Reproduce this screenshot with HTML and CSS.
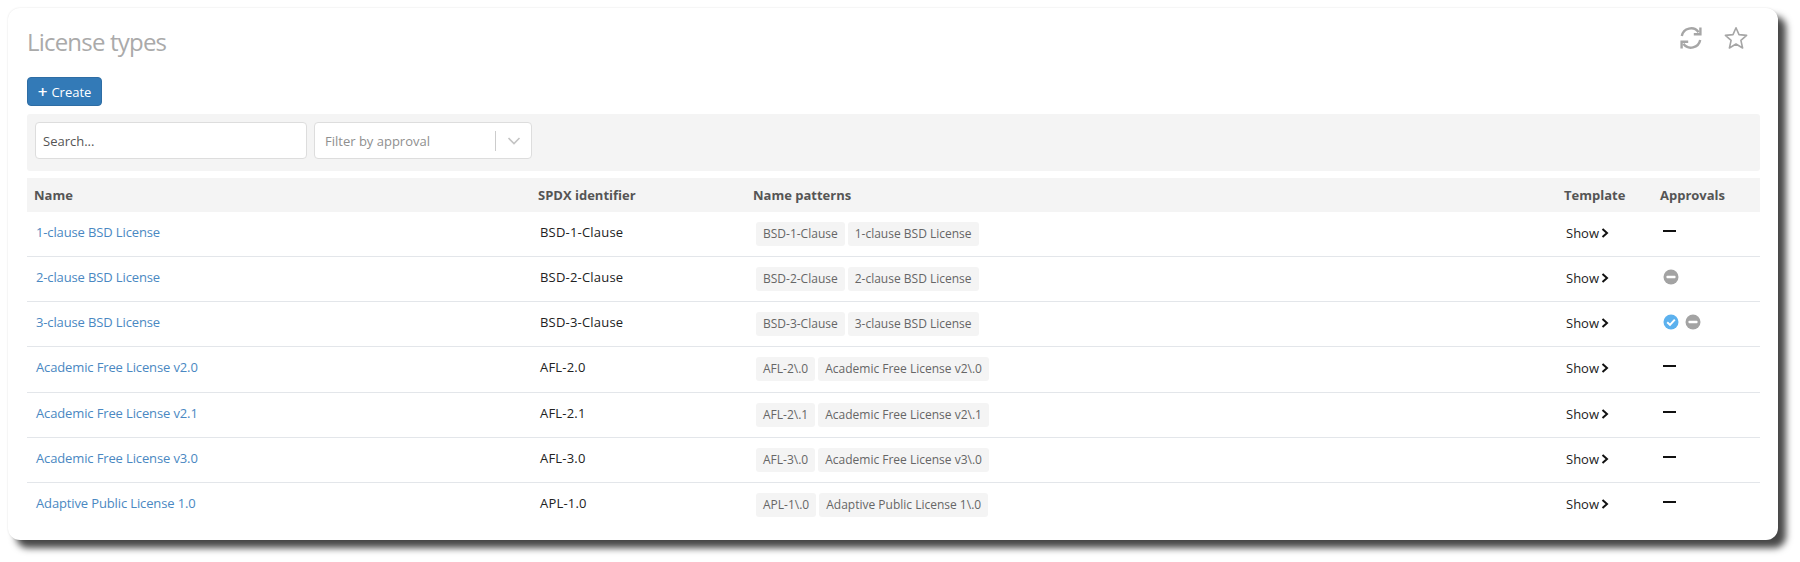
FILE: index.html
```html
<!DOCTYPE html>
<html lang="en">
<head>
<meta charset="utf-8">
<title>License types</title>
<link rel="stylesheet" href="styles.css">
</head>
<body>
<svg class="defs" width="0" height="0" aria-hidden="true">
  <symbol id="chev" viewBox="0 0 8 10"><path d="M1.5 1 L6 5 L1.5 9" fill="none" stroke="#111" stroke-width="2"/></symbol>
  <symbol id="dash" viewBox="0 0 13 2"><rect width="13" height="2" fill="#111"/></symbol>
  <symbol id="no" viewBox="0 0 16 16"><circle cx="8" cy="8" r="7.5" fill="#a3a3a3"/><rect x="3.5" y="6.8" width="9" height="2.4" rx=".6" fill="#fff"/></symbol>
  <symbol id="yes" viewBox="0 0 16 16"><circle cx="8" cy="8" r="7.5" fill="#5cb1ee"/><path d="M4.2 8.3 L7 10.9 L11.8 5.6" fill="none" stroke="#fff" stroke-width="2"/></symbol>
</svg>
<main class="card">
  <header class="head">
    <h1 class="title">License types</h1>
    <div class="head-icons">
      <svg class="head-icon" viewBox="0 0 24 24" fill="none" stroke="#a6a6a6" stroke-width="2.4"><path d="M2.8 10 A9.4 9.4 0 0 1 19.6 6.2"/><path d="M21.4 1.6 V8.2 H14.8"/><path d="M21.2 14 A9.4 9.4 0 0 1 4.4 17.8"/><path d="M2.6 22.4 V15.8 H9.2"/></svg>
      <svg class="head-icon" viewBox="0 0 24 24" fill="none" stroke="#a6a6a6" stroke-width="1.6" stroke-linejoin="round"><path d="M12 1.8 L15 8.6 L22.6 9.4 L16.9 14.4 L18.6 22 L12 18 L5.4 22 L7.1 14.4 L1.4 9.4 L9 8.6 Z"/></svg>
    </div>
  </header>
  <a class="btn" href="#"><span class="plus">+</span> Create</a>
  <form class="toolbar">
    <div class="field search">Search...</div>
    <div class="field select"><span class="placeholder">Filter by approval</span><span class="sep"></span><svg class="caret" viewBox="0 0 14 8"><path d="M1.5 1 L7 6.5 L12.5 1" fill="none" stroke="#c4c4c4" stroke-width="1.6"/></svg></div>
  </form>
  <table class="grid">
    <colgroup><col class="c1"><col class="c2"><col class="c3"><col class="c4"><col class="c5"></colgroup>
    <thead><tr><th>Name</th><th>SPDX identifier</th><th>Name patterns</th><th>Template</th><th>Approvals</th></tr></thead>
    <tbody>
      <tr><td><a href="#">1-clause BSD License</a></td><td class="spdx">BSD-1-Clause</td><td class="tags"><span class="tag">BSD-1-Clause</span><span class="tag">1-clause BSD License</span></td><td class="show">Show <svg class="chev"><use href="#chev"/></svg></td><td class="appr"><svg class="dash"><use href="#dash"/></svg></td></tr>
      <tr><td><a href="#">2-clause BSD License</a></td><td class="spdx">BSD-2-Clause</td><td class="tags"><span class="tag">BSD-2-Clause</span><span class="tag">2-clause BSD License</span></td><td class="show">Show <svg class="chev"><use href="#chev"/></svg></td><td class="appr"><svg class="disc"><use href="#no"/></svg></td></tr>
      <tr><td><a href="#">3-clause BSD License</a></td><td class="spdx">BSD-3-Clause</td><td class="tags"><span class="tag">BSD-3-Clause</span><span class="tag">3-clause BSD License</span></td><td class="show">Show <svg class="chev"><use href="#chev"/></svg></td><td class="appr"><svg class="disc"><use href="#yes"/></svg><svg class="disc"><use href="#no"/></svg></td></tr>
      <tr><td><a href="#">Academic Free License v2.0</a></td><td class="spdx">AFL-2.0</td><td class="tags"><span class="tag">AFL-2\.0</span><span class="tag">Academic Free License v2\.0</span></td><td class="show">Show <svg class="chev"><use href="#chev"/></svg></td><td class="appr"><svg class="dash"><use href="#dash"/></svg></td></tr>
      <tr><td><a href="#">Academic Free License v2.1</a></td><td class="spdx">AFL-2.1</td><td class="tags"><span class="tag">AFL-2\.1</span><span class="tag">Academic Free License v2\.1</span></td><td class="show">Show <svg class="chev"><use href="#chev"/></svg></td><td class="appr"><svg class="dash"><use href="#dash"/></svg></td></tr>
      <tr><td><a href="#">Academic Free License v3.0</a></td><td class="spdx">AFL-3.0</td><td class="tags"><span class="tag">AFL-3\.0</span><span class="tag">Academic Free License v3\.0</span></td><td class="show">Show <svg class="chev"><use href="#chev"/></svg></td><td class="appr"><svg class="dash"><use href="#dash"/></svg></td></tr>
      <tr><td><a href="#">Adaptive Public License 1.0</a></td><td class="spdx">APL-1.0</td><td class="tags"><span class="tag">APL-1\.0</span><span class="tag">Adaptive Public License 1\.0</span></td><td class="show">Show <svg class="chev"><use href="#chev"/></svg></td><td class="appr"><svg class="dash"><use href="#dash"/></svg></td></tr>
    </tbody>
  </table>
</main>
</body>
</html>
```
FILE: styles.css
```css
* { box-sizing: border-box; }
html, body { margin: 0; height: 100%; background: #fff; overflow: hidden; }
body { padding: 8px 22px 0 8px; font: 13px/18px "Open Sans", sans-serif; color: #333; }
.defs { position: absolute; }
.card {
  height: 532px;
  padding: 0 18px 0 19px;
  background: #fff;
  border-radius: 12px;
  box-shadow: 8px 8px 7px rgba(0,0,0,.72), 0 0 2px rgba(0,0,0,.12);
}
.head { display: flex; justify-content: space-between; height: 69px; }
.title { margin: 0; padding-top: 17px; font-size: 24px; line-height: 34px; font-weight: 400; color: #aaa; letter-spacing: -.8px; }
.head-icons { display: flex; gap: 21px; padding: 18px 12px 0 0; }
.head-icon { width: 24px; height: 24px; }
.btn {
  display: flex; align-items: center; justify-content: center; gap: 4px;
  width: 75px; height: 29px;
  background: #337ab7; border: 1px solid #2e6da4; border-radius: 4px;
  color: #fff; font-size: 13px; text-decoration: none;
}
.plus { font-size: 17px; font-weight: 600; line-height: 1; }
.toolbar {
  display: flex; gap: 7px; height: 57px; margin-top: 8px; padding: 8px;
  background: #f4f4f4; border-radius: 3px;
}
.field { display: flex; align-items: center; height: 37px; background: #fff; border: 1px solid #ddd; border-radius: 4px; }
.search { width: 272px; padding-left: 7px; color: #555; }
.select { width: 218px; padding-left: 10px; color: #8f8f8f; }
.placeholder { flex: 1; }
.sep { width: 1px; height: 20px; background: #ccc; }
.caret { width: 14px; height: 8px; margin: 0 10px 0 11px; }
.grid { width: 1733px; margin-top: 7px; border-collapse: collapse; table-layout: fixed; }
.c1 { width: 504px; } .c2 { width: 215px; } .c3 { width: 811px; } .c4 { width: 96px; } .c5 { width: 107px; }
th { height: 34px; padding: 0 7px; background: #f4f4f4; text-align: left; font-weight: 700; color: #555; }
tbody tr { height: 45px; border-bottom: 1px solid #e3e6ea; }
tbody tr:first-child { height: 44px; }
tbody tr:nth-child(4) { height: 46px; }
tbody tr:last-child { border-bottom: 0; }
td { padding: 11px 9px 0; vertical-align: top; white-space: nowrap; color: #222; }
td a { color: #4a88c2; text-decoration: none; letter-spacing: -.13px; }
.spdx { letter-spacing: .2px; }
.tags { padding: 10px 10px 0; }
.tag {
  display: inline-block; height: 24px; margin-right: 3px; padding: 0 7px;
  background: #f4f4f4; border-radius: 3px; color: #666; font-size: 12px; line-height: 24px;
}
.show { padding-top: 12px; }
.chev { width: 8px; height: 10px; margin-left: -1px; }
.appr { padding: 12px 10px 0; line-height: 16px; }
.dash { display: block; width: 13px; height: 2px; margin: 6px 0 0; }
.disc { width: 16px; height: 16px; margin-right: 6px; }
```
